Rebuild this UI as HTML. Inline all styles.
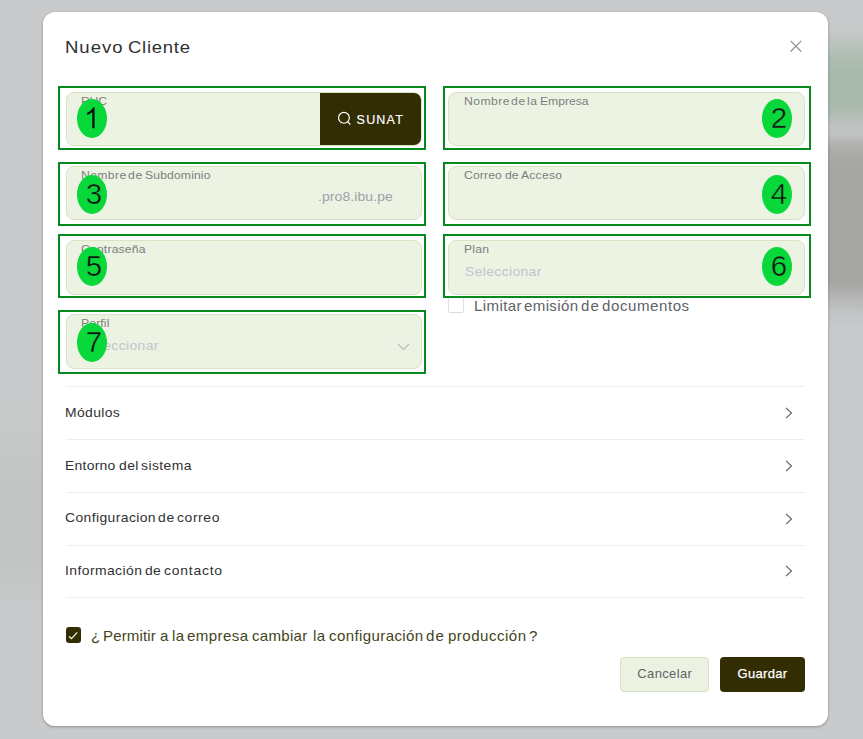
<!DOCTYPE html>
<html><head><meta charset="utf-8">
<style>
*{box-sizing:border-box;margin:0;padding:0}
html,body{width:863px;height:739px;overflow:hidden}
body{font-family:"Liberation Sans",sans-serif;background:#c9cacb;position:relative}
.bgr{position:absolute;left:828px;top:0;width:35px;height:739px;
 background:linear-gradient(to bottom,#c9cacb 0px,#c8c9ca 30px,#bac3bc 45px,#aebdb2 58px,#a8b9ac 73px,#a8b9ac 105px,#b3bdb6 116px,#bfc3c2 128px,#c0c1c1 135px,#b1b2af 145px,#a9aaa6 155px,#a5a6a2 170px,#a5a6a2 282px,#b5b6b5 298px,#c4c5c7 315px,#c9cacb 332px,#c9cacb 739px)}
.dlg{position:absolute;left:43px;top:12px;width:785px;height:714px;background:#fff;border-radius:12px;box-shadow:0 1px 3px rgba(0,0,0,.3)}
.abs{position:absolute}
.fld{position:absolute;height:54px;background:#ecf3e3;border:1px solid #d8e4c3;border-radius:8px}
.gb{position:absolute;width:368px;height:64px;border:2px solid #06891e}
.el{position:absolute;width:30px;height:39px;border-radius:50%;background:#09d83b;color:#111;font-size:29.5px;line-height:38px;text-align:center;padding-left:4px;-webkit-text-stroke:.45px #09d83b}
.el svg{position:absolute;left:0;top:0}
.row{position:absolute;left:66px;width:739px;height:53px;border-top:1px solid #ebeef5}
.row svg{position:absolute;left:719px;top:20px}
.t{position:absolute;white-space:nowrap;transform-origin:0 0}
.tt{font-size:17px;line-height:22px;color:#303133;transform:scaleX(1.09)}
.tl{font-size:11.5px;line-height:14px;color:#7e7e7e;transform:scaleX(1.06)}
.tp{font-size:13px;line-height:18px;color:#c0c4cc;transform:scaleX(1.07)}
.tq{font-size:13px;line-height:18px;color:#9ea0a8;transform:scaleX(1.07)}
.tc{font-size:14.5px;line-height:18px;color:#606266;transform:scaleX(1.04)}
.tr{font-size:13px;line-height:16px;color:#303133;transform:scaleX(1.07)}
.tm{font-size:14.5px;line-height:18px;color:#44451c;transform:scaleX(1.04)}

</style></head><body>
<div class="bgr"></div>
<div class="abs" style="left:0;top:400px;width:43px;height:260px;background:linear-gradient(to bottom,#c9cacb 0,#c6c8c7 50px,#c2c4c3 95px,#c2c4c3 150px,#c7c8c9 200px,#c9cacb 240px)"></div>
<div class="dlg"></div>
<svg class="abs" style="left:790px;top:40px" width="12" height="12" viewBox="0 0 12 12"><path d="M0.6 0.9 L11.2 11.5 M11.2 0.9 L0.6 11.5" stroke="#909297" stroke-width="1.25" fill="none"/></svg>

<!-- fields -->
<div class="fld" style="left:66px;top:92px;width:356px"></div>
<div class="abs" style="left:320px;top:93px;width:101px;height:52px;background:#332d04;border-radius:0 7px 7px 0"></div>
<svg class="abs" style="left:337px;top:111.2px" width="15" height="15" viewBox="0 0 15 15"><circle cx="6.95" cy="6.85" r="5.4" stroke="#fff" stroke-width="1.2" fill="none"/><path d="M10.8 10.8 L13.4 13.5" stroke="#fff" stroke-width="1.2"/></svg>
<div class="abs" style="left:356.6px;top:112px;font-size:12.5px;line-height:16px;color:#fff;letter-spacing:1.2px;white-space:nowrap;-webkit-text-stroke:.15px #fff">SUNAT</div>
<div class="fld" style="left:448px;top:92px;width:357px"></div>
<div class="fld" style="left:66px;top:166px;width:356px"></div>
<div class="fld" style="left:448px;top:166px;width:357px"></div>
<div class="fld" style="left:66px;top:240px;width:356px;height:55px"></div>
<div class="fld" style="left:448px;top:240px;width:357px;height:55px"></div>
<div class="fld" style="left:66px;top:314px;width:356px;height:55px"></div>
<svg class="abs" style="left:396.5px;top:342.5px" width="13" height="8" viewBox="0 0 13 8"><path d="M0.8 0.8 L6.5 6.5 L12.2 0.8" stroke="#b4b8bd" stroke-width="1.1" fill="none"/></svg>
<span class="t tl" style="left:81.14px;top:94px;letter-spacing:-0.200px">RUC</span>
<span class="t tl" style="left:463.77px;top:94px;letter-spacing:0.417px">Nombre</span>
<span class="t tl" style="left:511.04px;top:94px;letter-spacing:0.740px">de</span>
<span class="t tl" style="left:527.25px;top:94px;letter-spacing:0.412px">la</span>
<span class="t tl" style="left:539.94px;top:94px;letter-spacing:-0.033px">Empresa</span>
<span class="t tl" style="left:80.84px;top:168px;letter-spacing:0.343px">Nombre</span>
<span class="t tl" style="left:128.24px;top:168px;letter-spacing:0.740px">de</span>
<span class="t tl" style="left:144.53px;top:168px;letter-spacing:0.114px">Subdominio</span>
<span class="t tl" style="left:463.73px;top:168px;letter-spacing:0.100px">Correo</span>
<span class="t tl" style="left:505.00px;top:168px;letter-spacing:0.000px">de</span>
<span class="t tl" style="left:520.95px;top:168px;letter-spacing:0.187px">Acceso</span>
<span class="t tl" style="left:80.96px;top:242px;letter-spacing:0.159px">Contraseña</span>
<span class="t tl" style="left:464.12px;top:242px;letter-spacing:0.195px">Plan</span>
<span class="t tl" style="left:80.97px;top:316px;letter-spacing:0.110px">Perfil</span>
<span class="t tp" style="left:464.72px;top:263px;letter-spacing:0.341px">Seleccionar</span>
<span class="t tp" style="left:82.04px;top:337px;letter-spacing:0.347px">Seleccionar</span>
<span class="t tq" style="left:317.54px;top:188px;letter-spacing:0.113px">.pro8.ibu.pe</span>

<!-- checkbox limitar -->
<div class="abs" style="left:448px;top:297px;width:16px;height:16px;border:1px solid #dcdfe6;border-radius:2px;background:#fff"></div>

<!-- green annotation boxes -->
<div class="gb" style="left:58px;top:86px"></div>
<div class="gb" style="left:443px;top:86px"></div>
<div class="gb" style="left:58px;top:162px"></div>
<div class="gb" style="left:443px;top:162px"></div>
<div class="gb" style="left:58px;top:234px"></div>
<div class="gb" style="left:443px;top:234px"></div>
<div class="gb" style="left:58px;top:310px"></div>
<div class="el" style="left:77px;top:99px"><svg width="30" height="39" viewBox="0 0 30 39"><g transform="translate(7.0,29.2) scale(0.01416,-0.01416)"><path d="M748 0H583V1147Q518 1085 412 1023Q307 961 223 930V1085Q374 1160 487 1268Q600 1377 647 1472H748Z" fill="#111"/></g></svg></div>
<div class="el" style="left:762px;top:99px">2</div>
<div class="el" style="left:77px;top:175px">3</div>
<div class="el" style="left:762px;top:175px">4</div>
<div class="el" style="left:77px;top:247px">5</div>
<div class="el" style="left:762px;top:247px">6</div>
<div class="el" style="left:77px;top:323px">7</div>

<!-- collapse -->
<div class="row" style="top:386px"><svg width="8" height="12" viewBox="0 0 8 12"><path d="M1 0.8 L6.5 6 L1 11.2" stroke="#606266" stroke-width="1.15" fill="none"/></svg></div>
<div class="row" style="top:439px"><svg width="8" height="12" viewBox="0 0 8 12"><path d="M1 0.8 L6.5 6 L1 11.2" stroke="#606266" stroke-width="1.15" fill="none"/></svg></div>
<div class="row" style="top:492px"><svg style="top:19.6px" width="8" height="12" viewBox="0 0 8 12"><path d="M1 0.8 L6.5 6 L1 11.2" stroke="#606266" stroke-width="1.15" fill="none"/></svg></div>
<div class="row" style="top:545px;border-bottom:1px solid #ebeef5;height:53px"><svg style="top:19.4px" width="8" height="12" viewBox="0 0 8 12"><path d="M1 0.8 L6.5 6 L1 11.2" stroke="#606266" stroke-width="1.15" fill="none"/></svg></div>

<!-- permitir checkbox -->
<div class="abs" style="left:66px;top:627px;width:15px;height:16px;background:#332d04;border-radius:3px"></div>
<svg class="abs" style="left:66px;top:627px" width="15" height="16" viewBox="0 0 15 16"><path d="M3.0 9.5 L5.5 11.6 L11.2 5.3" stroke="#f4f4ee" stroke-width="1.25" fill="none"/></svg>
<span class="t tt" style="left:65.11px;top:37px;letter-spacing:0.898px">Nuevo</span>
<span class="t tt" style="left:127.78px;top:37px;letter-spacing:0.656px">Cliente</span>
<span class="t tc" style="left:474.10px;top:297px;letter-spacing:0.384px">Limitar</span>
<span class="t tc" style="left:524.20px;top:297px;letter-spacing:0.334px">emisión</span>
<span class="t tc" style="left:581.20px;top:297px;letter-spacing:0.962px">de</span>
<span class="t tc" style="left:602.06px;top:297px;letter-spacing:0.535px">documentos</span>
<span class="t tr" style="left:65.13px;top:405px;letter-spacing:0.350px">Módulos</span>
<span class="t tr" style="left:65.13px;top:458px;letter-spacing:0.248px">Entorno</span>
<span class="t tr" style="left:119.32px;top:458px;letter-spacing:0.396px">del</span>
<span class="t tr" style="left:140.98px;top:458px;letter-spacing:0.406px">sistema</span>
<span class="t tr" style="left:64.97px;top:510px;letter-spacing:0.371px">Configuracion</span>
<span class="t tr" style="left:157.61px;top:510px;letter-spacing:0.708px">de</span>
<span class="t tr" style="left:177.01px;top:510px;letter-spacing:0.558px">correo</span>
<span class="t tr" style="left:64.51px;top:563px;letter-spacing:0.392px">Información</span>
<span class="t tr" style="left:145.21px;top:563px;letter-spacing:0.241px">de</span>
<span class="t tr" style="left:164.02px;top:563px;letter-spacing:0.736px">contacto</span>
<span class="t tm" style="left:90.94px;top:627px;letter-spacing:0.000px">¿</span>
<span class="t tm" style="left:102.78px;top:627px;letter-spacing:0.105px">Permitir</span>
<span class="t tm" style="left:159.60px;top:627px;letter-spacing:0.000px">a</span>
<span class="t tm" style="left:171.51px;top:627px;letter-spacing:0.459px">la</span>
<span class="t tm" style="left:187.00px;top:627px;letter-spacing:0.400px">empresa</span>
<span class="t tm" style="left:252.36px;top:627px;letter-spacing:0.246px">cambiar</span>
<span class="t tm" style="left:312.81px;top:627px;letter-spacing:0.403px">la</span>
<span class="t tm" style="left:328.50px;top:627px;letter-spacing:0.359px">configuración</span>
<span class="t tm" style="left:425.90px;top:627px;letter-spacing:0.962px">de</span>
<span class="t tm" style="left:447.67px;top:627px;letter-spacing:0.454px">producción</span>
<span class="t tm" style="left:529.39px;top:627px;letter-spacing:0.000px">?</span>

<!-- buttons -->
<div class="abs" style="left:620px;top:657px;width:89px;height:35px;background:#ecf2e2;border:1px solid #d6e3c0;border-radius:4px;font-size:13px;line-height:31px;text-align:center;color:#606266;letter-spacing:.35px;padding-left:.5px">Cancelar</div>
<div class="abs" style="left:720px;top:657px;width:85px;height:35px;background:#332d04;border-radius:4px;font-size:13px;line-height:33px;text-align:center;color:#fff;letter-spacing:.3px;-webkit-text-stroke:.25px #fff">Guardar</div>
</body></html>
